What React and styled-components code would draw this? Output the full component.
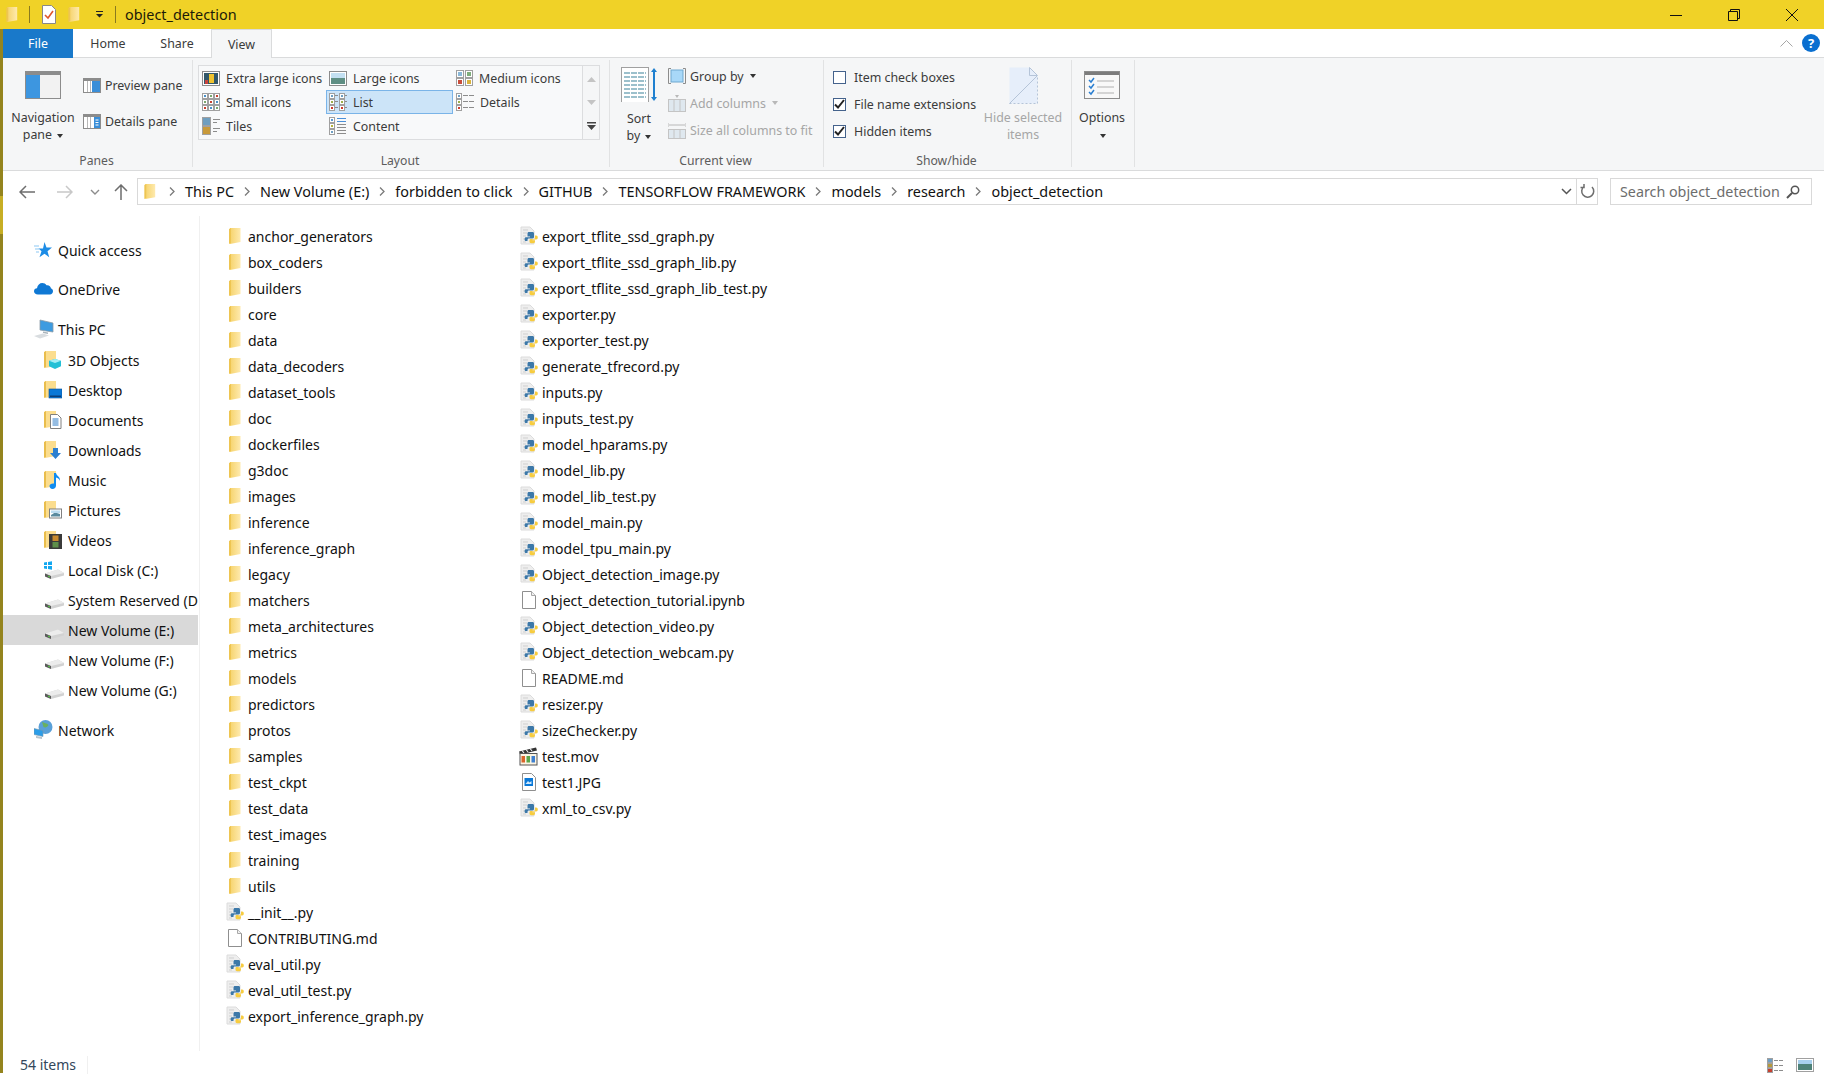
import React from "react";
import styled, { createGlobalStyle } from "styled-components";

const GlobalStyle = createGlobalStyle`
    html, body {
        margin: 0;
        padding: 0;
        width: 1824px;
        height: 1080px;
        overflow: hidden;
        background: #fff;
    }
    * { box-sizing: border-box; }
`;

const folders = ["anchor_generators", "box_coders", "builders", "core", "data", "data_decoders", "dataset_tools", "doc", "dockerfiles", "g3doc", "images", "inference", "inference_graph", "legacy", "matchers", "meta_architectures", "metrics", "models", "predictors", "protos", "samples", "test_ckpt", "test_data", "test_images", "training", "utils"];

const firstCol = [
    ...folders.map((name) => ({ name, kind: "folder" })),
    { name: "__init__.py", kind: "py" },
    { name: "CONTRIBUTING.md", kind: "blank" },
    { name: "eval_util.py", kind: "py" },
    { name: "eval_util_test.py", kind: "py" },
    { name: "export_inference_graph.py", kind: "py" },
];

const secondCol = [
    { name: "export_tflite_ssd_graph.py", kind: "py" },
    { name: "export_tflite_ssd_graph_lib.py", kind: "py" },
    { name: "export_tflite_ssd_graph_lib_test.py", kind: "py" },
    { name: "exporter.py", kind: "py" },
    { name: "exporter_test.py", kind: "py" },
    { name: "generate_tfrecord.py", kind: "py" },
    { name: "inputs.py", kind: "py" },
    { name: "inputs_test.py", kind: "py" },
    { name: "model_hparams.py", kind: "py" },
    { name: "model_lib.py", kind: "py" },
    { name: "model_lib_test.py", kind: "py" },
    { name: "model_main.py", kind: "py" },
    { name: "model_tpu_main.py", kind: "py" },
    { name: "Object_detection_image.py", kind: "py" },
    { name: "object_detection_tutorial.ipynb", kind: "blank" },
    { name: "Object_detection_video.py", kind: "py" },
    { name: "Object_detection_webcam.py", kind: "py" },
    { name: "README.md", kind: "blank" },
    { name: "resizer.py", kind: "py" },
    { name: "sizeChecker.py", kind: "py" },
    { name: "test.mov", kind: "mov" },
    { name: "test1.JPG", kind: "jpg" },
    { name: "xml_to_csv.py", kind: "py" },
];

const crumbs = ["This PC", "New Volume (E:)", "forbidden to click", "GITHUB", "TENSORFLOW FRAMEWORK", "models", "research", "object_detection"];

// ---------- icons ----------

function FolderIcon({ w = 12, h = 18 }) {
    return (
        <svg width={w} height={h} viewBox="0 0 12 18">
            <defs>
                <linearGradient id="fg" x1="0" x2="1" y1="0" y2="0">
                    <stop offset="0" stopColor="#f6d36c" />
                    <stop offset="1" stopColor="#feeaae" />
                </linearGradient>
            </defs>
            <path d="M1 1h10.500v14L1 17z" fill="url(#fg)" />
            <path d="M0 2l2-1v15l-2 1z" fill="#eec552" />
        </svg>
    );
}

function SmallFolder({ children }) {
    return (
        <svg width="18" height="20" viewBox="0 0 18 20">
            <path d="M1 1h11v15L1 18z" fill="#fbdd8e" />
            <path d="M0 2l2-1v16l-2 1z" fill="#e9bd4c" />
            {children}
        </svg>
    );
}

function PyIcon() {
    return (
        <svg width="20" height="20" viewBox="0 0 20 20">
            <path d="M2 1h9l4 4v13H2z" fill="#eeeeee" stroke="#dcdcdc" />
            <path d="M4 4h5M4 7h4M4 10h3M4 13h3M4 16h3" stroke="#cfcfcf" />
            <path d="M10 6h3.500c1 0 1.500.6 1.500 1.500V11c0 .9-.6 1.400-1.500 1.400H10c-1 0-1.500.6-1.500 1.500v1.200H7c-.9 0-1.400-.7-1.400-1.900 0-1.400.6-2 1.500-2H11v-.7H8.500V7.500C8.500 6.500 9 6 10 6z" fill="#3c78a8" />
            <path d="M16 9.500h1.200c1 0 1.600.7 1.600 2s-.6 2-1.600 2H13.500v.7H16v1.400c0 1-.6 1.600-1.600 1.600H12c-1 0-1.500-.6-1.500-1.600V14.200c0-1 .6-1.300 1.500-1.300h2.500c1 0 1.500-.6 1.500-1.500z" fill="#f7cc3f" />
        </svg>
    );
}

function BlankIcon() {
    return (
        <svg width="14" height="18" viewBox="0 0 14 18">
            <path d="M.5.5h9l4 4v13H.5z" fill="#fff" stroke="#8f8f8f" />
            <path d="M9.500.5v4h4" fill="#f0f0f0" stroke="#a8a8a8" />
        </svg>
    );
}

function MovIcon() {
    return (
        <svg width="19" height="19" viewBox="0 0 19 19">
            <path d="M0 4.500L17 .5l1 3-17 4z" fill="#333" />
            <path d="M3 3.500l2 2.500M7 2.500l2 2.500M11 1.500l2 2.500" stroke="#eee" strokeWidth="1.200" />
            <rect x="1" y="6.500" width="17" height="11.500" fill="#fbf4e4" stroke="#555" />
            <rect x="2.500" y="9" width="3.500" height="6.500" fill="#d9642a" />
            <rect x="7.500" y="9" width="3.500" height="6.500" fill="#5aa64a" />
            <rect x="12.500" y="9" width="3.500" height="6.500" fill="#3d7fd0" />
        </svg>
    );
}

function JpgIcon() {
    return (
        <svg width="14" height="18" viewBox="0 0 14 18">
            <path d="M.5.5h9l4 4v13H.5z" fill="#fff" stroke="#8f8f8f" />
            <rect x="2.500" y="5" width="8.500" height="8" fill="#0a78d7" />
            <path d="M3.500 11l2.500-3 1.500 1.500 2-1.500v3z" fill="#cfe7fb" />
        </svg>
    );
}

const fileIcons = {
    folder: <FolderIcon />,
    py: <PyIcon />,
    blank: <BlankIcon />,
    mov: <MovIcon />,
    jpg: <JpgIcon />,
};

function DriveIcon({ windows }) {
    return (
        <svg width="20" height="20" viewBox="0 0 20 20">
            {windows && <path d="M0 2.500l3-.5v3H0zM4 2l4-.7V5H4zM0 6h3v3l-3-.5zM4 6h4v3.700L4 9z" fill="#12a7f0" />}
            <path d="M1 13.500L14 9.500l6 3.500v2.500L7 19l-6-2.500z" fill="#d2d2d2" />
            <path d="M1 13.500L7 16l13-3-6-3.500z" fill="#ececec" />
            <path d="M1 13.500L7 16v3l-6-2.500z" fill="#5b5b5b" />
            <path d="M4 15.500l2 .8v1.200l-2-.8z" fill="#58c44a" />
        </svg>
    );
}

const navIcons = {
    quick: (
        <svg width="18" height="18" viewBox="0 0 18 18">
            <path d="M10.500 1l2 5.500H18l-4.500 3.700 1.700 6-4.700-3.500-5 3.500 2-6-3-2.700h4.500z" fill="#1c8ce6" />
            <path d="M0 5h5M1 8h4M2 11h3" stroke="#8cc8f4" strokeWidth="1.200" />
        </svg>
    ),
    onedrive: (
        <svg width="19" height="14" viewBox="0 0 19 14">
            <path d="M4 12.500C1.500 12.500 0 11 0 9.300c0-1.800 1.300-3 3-3C3.500 3 5.700 1 8.300 1c1.800 0 3.300.9 4.200 2.300 2.500-.4 4.200 1 4.500 3.200 1.300.2 2 1.300 2 2.800 0 1.900-1.400 3.200-3 3.200z" fill="#0f78d4" />
        </svg>
    ),
    pc: (
        <svg width="20" height="20" viewBox="0 0 20 20">
            <path d="M6 1l13 3v9L6 11z" fill="#3d9be0" stroke="#8a9aa6" strokeWidth=".800" />
            <path d="M9 12.500l5 1v1.500l-5-1z" fill="#aab4bb" />
            <path d="M0 17l9-2.500 6 2L6 19.500z" fill="#d9dde0" />
        </svg>
    ),
    objects: (
        <SmallFolder>
            <path d="M11 9l6 1.800v5.500L11 19l-6-2.700v-5.500z" fill="#23c0d6" />
            <path d="M11 9l6 1.800-6 2.200-6-2.200z" fill="#a5eef5" />
        </SmallFolder>
    ),
    desktop: (
        <SmallFolder>
            <rect x="5" y="9" width="13" height="9" fill="#0a78d7" stroke="#0a4f92" strokeWidth=".600" />
            <rect x="6" y="15.500" width="11" height="1.500" fill="#0c3f78" />
        </SmallFolder>
    ),
    documents: (
        <SmallFolder>
            <path d="M6.500 4.500h7l3.500 3.500v10.500H6.500z" fill="#fff" stroke="#808080" />
            <path d="M8.500 9h6M8.500 11h6M8.500 13h6M8.500 15h6" stroke="#2a7ac7" />
        </SmallFolder>
    ),
    downloads: (
        <SmallFolder>
            <path d="M9 8h5v5h3l-5.500 6L6 13h3z" fill="#2b7fd1" />
        </SmallFolder>
    ),
    music: (
        <SmallFolder>
            <path d="M10 3h2c.5 3 4.500 3.500 4 8-.5-2-2-3-4-3.500v8c0 2-1.500 3.500-3.500 3.500S5.500 17.500 5.500 16c0-1.800 2.300-3 4.500-2.500z" fill="#0f8cf0" />
        </SmallFolder>
    ),
    pictures: (
        <SmallFolder>
            <rect x="5.500" y="9" width="12" height="9" fill="#fff" stroke="#808080" />
            <path d="M7 15l4-2.500 5 1.500v2.500H7z" fill="#5a8a9e" />
            <rect x="7" y="10.500" width="9" height="2.500" fill="#bcdcf0" />
        </SmallFolder>
    ),
    videos: (
        <SmallFolder>
            <rect x="5" y="4" width="13" height="15" fill="#3a3a3a" />
            <rect x="8.500" y="5.500" width="6" height="5.500" fill="#c8892e" />
            <rect x="8.500" y="12" width="6" height="5.500" fill="#5e8f4a" />
        </SmallFolder>
    ),
    c: <DriveIcon windows />,
    drive: <DriveIcon />,
    network: (
        <svg width="20" height="20" viewBox="0 0 20 20">
            <circle cx="11.500" cy="7" r="7" fill="#5aa0d8" />
            <path d="M8 2c2 1 5 1 6.500 3-1 2-3 3-5 2z" fill="#69b060" />
            <path d="M0 8.500l9 2v6l-9-2z" fill="#2b9de8" stroke="#7b98ad" strokeWidth=".600" />
            <path d="M2 16l6 1v2l-6-1z" fill="#b9c4cc" />
        </svg>
    ),
};

function GalleryIcon({ type }) {
    const mini = (x, y, c) => (
        <g key={`${x}-${y}`}>
            <rect x={x + 0.5} y={y + 0.5} width="5" height="5" fill="#fff" stroke="#a0a0a0" />
            <rect x={x + 2} y={y + 2} width="2" height="2" fill={c} />
        </g>
    );
    const dash = (x, y, w) => <path key={`d${x}-${y}`} d={`M${x} ${y + 0.5}h${w}`} stroke="#8c8c8c" />;
    const frame = (x, y, c) => (
        <g key={`f${x}-${y}`}>
            <rect x={x + 0.5} y={y + 0.5} width="7" height="7" fill="#fff" stroke="#a0a0a0" />
            <rect x={x + 2} y={y + 2} width="4" height="4" fill={c} />
        </g>
    );
    if (type === "xl") {
        return (
            <svg width="18" height="15" viewBox="0 0 18 15">
                <rect x=".5" y=".5" width="17" height="14" fill="#fff" stroke="#8c8c8c" />
                <rect x="2" y="2" width="14" height="11" fill="#33586a" />
                <rect x="7" y="3" width="5" height="9" fill="#f0c330" />
                <rect x="3" y="9" width="3" height="4" fill="#c9443f" />
            </svg>
        );
    }
    if (type === "large") {
        return (
            <svg width="18" height="15" viewBox="0 0 18 15">
                <rect x=".5" y=".5" width="17" height="14" fill="#fff" stroke="#8c8c8c" />
                <rect x="2" y="2" width="14" height="5" fill="#c3e0f2" />
                <rect x="2" y="7" width="14" height="6" fill="#5f8f84" />
            </svg>
        );
    }
    if (type === "medium") {
        return (
            <svg width="17" height="16" viewBox="0 0 17 16">
                {frame(0, 0, "#8ab8d8")}
                {frame(9, 0, "#7fae7c")}
                {frame(0, 8, "#c84e3c")}
                {frame(9, 8, "#d9b33c")}
            </svg>
        );
    }
    if (type === "small") {
        const cs = ["#4a90c8", "#7aa86e", "#c7402f"];
        return (
            <svg width="18" height="18" viewBox="0 0 18 18">
                {[0, 6, 12].map((y, r) => [0, 6, 12].map((x, i) => mini(x, y, cs[(i + r) % 3])))}
            </svg>
        );
    }
    if (type === "list") {
        const cs = ["#6d9fc4", "#9db04a", "#d03a2c"];
        return (
            <svg width="18" height="18" viewBox="0 0 18 18">
                {[0, 6, 12].map((y, r) => (
                    <g key={y}>
                        {mini(0, y, cs[r])}
                        {dash(6, y + 2, 3)}
                        {mini(10, y, cs[r])}
                        {dash(16, y + 2, 2)}
                    </g>
                ))}
            </svg>
        );
    }
    if (type === "details") {
        const cs = ["#6d9fc4", "#9db04a", "#d03a2c"];
        return (
            <svg width="18" height="18" viewBox="0 0 18 18">
                {[0, 6, 12].map((y, r) => (
                    <g key={y}>
                        {mini(0, y, cs[r])}
                        {dash(7, y + 2, 5)}
                        {dash(13, y + 2, 5)}
                    </g>
                ))}
            </svg>
        );
    }
    if (type === "tiles") {
        return (
            <svg width="18" height="18" viewBox="0 0 18 18">
                <rect x=".5" y=".5" width="8" height="8" fill="#6f9ebf" stroke="#a0a0a0" />
                <rect x=".5" y="9.500" width="8" height="8" fill="#c99a3a" stroke="#a0a0a0" />
                <path d="M11 2.500h7M11 5.500h4M11 11.500h7M11 14.500h4" stroke="#8c8c8c" />
            </svg>
        );
    }
    return (
        <svg width="18" height="18" viewBox="0 0 18 18">
            {[0, 6, 12].map((y, r) => (
                <g key={y}>
                    {mini(0, y, ["#5b9bd5", "#b5b53c", "#6d9fc4"][r])}
                    <path d={`M8 ${y + 1.5}h9M8 ${y + 4.5}h9`} stroke={r === 0 ? "#4a90d9" : "#8c8c8c"} />
                </g>
            ))}
        </svg>
    );
}

function PaneIcon({ kind }) {
    return (
        <svg width="18" height="15" viewBox="0 0 18 15">
            <rect x=".5" y=".5" width="17" height="14" fill="#fff" stroke="#8c8c8c" />
            <rect x="1" y="1" width="16" height="2" fill="#8c8c8c" />
            {kind === "details" ? <rect x="11" y="3" width="6" height="11" fill="#3a8ed8" /> : <rect x="9" y="3" width="8" height="11" fill="#3a8ed8" />}
            <path d="M4.500 3v11M7.500 3v11" stroke="#b8b8b8" />
            {kind === "details" && <path d="M12.500 6h3M12.500 8.500h3M12.500 11h3" stroke="#fff" />}
        </svg>
    );
}

const Check = () => (
    <svg width="11" height="10" viewBox="0 0 11 10">
        <path d="M1 5.500l3 3 6-7.500" fill="none" stroke="#222" strokeWidth="2" />
    </svg>
);

// ---------- page ----------

export default function App() {
    return (
        <>
            <GlobalStyle />
            <Window>
                <Edge />
                <Main>
                    <TitleBar>
                        <QuickIcons>
                            <FolderIcon w={12} h={17} />
                            <TitleSep />
                            <svg width="14" height="19" viewBox="0 0 14 19">
                                <path d="M.5.500h9l4 4v14H.5z" fill="#fff" stroke="#888" />
                                <path d="M3 10l3 3 5-7" fill="none" stroke="#e0562a" strokeWidth="1.600" />
                            </svg>
                            <FolderIcon w={12} h={17} />
                            <Dropper>
                                <svg width="7" height="7" viewBox="0 0 7 7">
                                    <path d="M0 0h7v1H0zM0 3h7L3.500 6.500z" fill="#222" />
                                </svg>
                            </Dropper>
                            <TitleSep />
                        </QuickIcons>
                        <TitleText>object_detection</TitleText>
                        <WindowButtons>
                            <WinButton>
                                <svg width="12" height="12" viewBox="0 0 12 12"><path d="M0 6.500h12" stroke="#111" /></svg>
                            </WinButton>
                            <WinButton>
                                <svg width="12" height="12" viewBox="0 0 12 12"><path d="M.5 2.500h9v9h-9zM2.500 2.500v-2h9v9h-2" fill="none" stroke="#111" /></svg>
                            </WinButton>
                            <WinButton>
                                <svg width="12" height="12" viewBox="0 0 12 12"><path d="M0 0l12 12M12 0L0 12" stroke="#111" /></svg>
                            </WinButton>
                        </WindowButtons>
                    </TitleBar>

                    <TabBar>
                        <FileTab>File</FileTab>
                        <Tab $w={70}>Home</Tab>
                        <Tab $w={68}>Share</Tab>
                        <ViewTab>View</ViewTab>
                        <TabRight>
                            <svg width="13" height="7" viewBox="0 0 13 7"><path d="M.5 6.500l6-6 6 6" fill="none" stroke="#a6a6a6" /></svg>
                            <HelpDot>?</HelpDot>
                        </TabRight>
                    </TabBar>

                    <Ribbon>
                        <Group $w={190}>
                            <GroupBody>
                                <BigButton $w={80}>
                                    <svg width="36" height="28" viewBox="0 0 36 28">
                                        <rect x=".5" y=".5" width="35" height="27" fill="#f2f2f2" stroke="#8c8c8c" />
                                        <rect x="1" y="1" width="34" height="3" fill="#8c8c8c" />
                                        <rect x="1" y="4" width="14" height="23" fill="#3d96e0" />
                                    </svg>
                                    <BigLabel $top={10}>Navigation</BigLabel>
                                    <BigLabel>pane <Caret /></BigLabel>
                                </BigButton>
                                <PaneCol>
                                    <PaneRow><PaneIcon kind="preview" />Preview pane</PaneRow>
                                    <PaneRow><PaneIcon kind="details" />Details pane</PaneRow>
                                </PaneCol>
                            </GroupBody>
                            <GroupLabel>Panes</GroupLabel>
                        </Group>

                        <Group $w={417}>
                            <GroupBody>
                                <Gallery>
                                    <GalleryGrid>
                                        <GalleryItem><GalleryIcon type="xl" />Extra large icons</GalleryItem>
                                        <GalleryItem><GalleryIcon type="large" />Large icons</GalleryItem>
                                        <GalleryItem><GalleryIcon type="medium" />Medium icons</GalleryItem>
                                        <GalleryItem><GalleryIcon type="small" />Small icons</GalleryItem>
                                        <GalleryItem $active><GalleryIcon type="list" />List</GalleryItem>
                                        <GalleryItem><GalleryIcon type="details" />Details</GalleryItem>
                                        <GalleryItem><GalleryIcon type="tiles" />Tiles</GalleryItem>
                                        <GalleryItem><GalleryIcon type="content" />Content</GalleryItem>
                                    </GalleryGrid>
                                    <GalleryScroll>
                                        <svg width="9" height="5" viewBox="0 0 9 5"><path d="M4.500 0L9 5H0z" fill="#c4c4c4" /></svg>
                                        <svg width="9" height="5" viewBox="0 0 9 5"><path d="M0 0h9L4.500 5z" fill="#c4c4c4" /></svg>
                                        <svg width="9" height="8" viewBox="0 0 9 8"><path d="M0 0h9v1.500H0zM0 3h9L4.500 8z" fill="#444" /></svg>
                                    </GalleryScroll>
                                </Gallery>
                            </GroupBody>
                            <GroupLabel>Layout</GroupLabel>
                        </Group>

                        <Group $w={214}>
                            <GroupBody>
                                <SortButton>
                                    <svg width="40" height="35" viewBox="0 0 40 35">
                                        <rect x=".5" y=".5" width="27" height="35" fill="#fff" stroke="#a0a0a0" />
                                        <path d="M3 6h22M3 10h22M3 14h22M3 18h22M3 22h22M3 26h22M3 30h22" stroke="#9cc0cc" strokeWidth="2" strokeDasharray="6 1" />
                                        <path d="M33 1l3 4h-2v25h2l-3 4-3-4h2V5h-2z" fill="#1f80d0" />
                                    </svg>
                                    <BigLabel $top={8}>Sort</BigLabel>
                                    <BigLabel>by <Caret /></BigLabel>
                                </SortButton>
                                <ViewCol>
                                    <ViewRow>
                                        <svg width="18" height="16" viewBox="0 0 18 16">
                                            <path d="M3 .5H.5v15H3M15 .5h2.500v15H15" fill="none" stroke="#8c8c8c" />
                                            <rect x="3" y="2" width="12" height="12" fill="#a8d8f8" stroke="#6fa8d0" />
                                        </svg>
                                        Group by <Caret />
                                    </ViewRow>
                                    <ViewRow $off>
                                        <svg width="18" height="17" viewBox="0 0 18 17">
                                            <path d="M7 0h4l-2 3z" fill="#b8b8b8" />
                                            <rect x=".5" y="4.500" width="17" height="12" fill="#dfe8ef" stroke="#c4c4c4" />
                                            <path d="M6 5v11M12 5v11" stroke="#c4c4c4" />
                                        </svg>
                                        Add columns <Caret $off />
                                    </ViewRow>
                                    <ViewRow $off>
                                        <svg width="18" height="17" viewBox="0 0 18 17">
                                            <path d="M0 1v4M18 1v4M1 3h16" stroke="#b8b8b8" />
                                            <rect x=".5" y="7.500" width="17" height="9" fill="#dfe8ef" stroke="#c4c4c4" />
                                            <path d="M6 8v8M12 8v8" stroke="#c4c4c4" />
                                        </svg>
                                        Size all columns to fit
                                    </ViewRow>
                                </ViewCol>
                            </GroupBody>
                            <GroupLabel>Current view</GroupLabel>
                        </Group>

                        <Group $w={248}>
                            <GroupBody>
                                <CheckCol>
                                    <CheckRow><CheckBox /> Item check boxes</CheckRow>
                                    <CheckRow><CheckBox><Check /></CheckBox> File name extensions</CheckRow>
                                    <CheckRow><CheckBox><Check /></CheckBox> Hidden items</CheckRow>
                                </CheckCol>
                                <HideButton>
                                    <svg width="29" height="37" viewBox="0 0 29 37">
                                        <path d="M.5.500h20l8 8v28H.5z" fill="#e6eefa" />
                                        <path d="M20.500.500l8 8h-8zM.5 36.500L28 9" fill="none" stroke="#b5c4d8" />
                                        <path d="M.5 36.500h28v-28" fill="none" stroke="#b5c4d8" strokeDasharray="2 2" />
                                    </svg>
                                    <BigLabel $top={5} $off>Hide selected</BigLabel>
                                    <BigLabel $off>items</BigLabel>
                                </HideButton>
                            </GroupBody>
                            <GroupLabel>Show/hide</GroupLabel>
                        </Group>

                        <Group $w={63}>
                            <OptionsButton>
                                <svg width="36" height="28" viewBox="0 0 36 28">
                                    <rect x=".5" y=".5" width="35" height="27" fill="#f8f8f8" stroke="#8c8c8c" />
                                    <rect x="1" y="1" width="34" height="3" fill="#7c7c7c" />
                                    <path d="M5 9l2 2 3-4M5 15l2 2 3-4M5 21l2 2 3-4" fill="none" stroke="#2b7fd1" strokeWidth="1.500" />
                                    <path d="M13 10h17M13 16h17M13 22h17" stroke="#b0b0b0" />
                                </svg>
                                <BigLabel $top={10}>Options</BigLabel>
                                <BigLabel><Caret /></BigLabel>
                            </OptionsButton>
                        </Group>
                    </Ribbon>

                    <NavBar>
                        <Arrows>
                            <ArrowSlot $w={38}><svg width="16" height="14" viewBox="0 0 16 14"><path d="M7 1L1 7l6 6M1 7h15" fill="none" stroke="#6e6e6e" strokeWidth="1.500" /></svg></ArrowSlot>
                            <ArrowSlot $w={38}><svg width="16" height="14" viewBox="0 0 16 14"><path d="M9 1l6 6-6 6M15 7H0" fill="none" stroke="#c8c8c8" strokeWidth="1.500" /></svg></ArrowSlot>
                            <ArrowSlot $w={22}><svg width="10" height="6" viewBox="0 0 10 6"><path d="M1 1l4 4 4-4" fill="none" stroke="#8c8c8c" strokeWidth="1.400" /></svg></ArrowSlot>
                            <ArrowSlot $w={30}><svg width="14" height="16" viewBox="0 0 14 16"><path d="M1 7l6-6 6 6M7 1v15" fill="none" stroke="#6e6e6e" strokeWidth="1.500" /></svg></ArrowSlot>
                        </Arrows>
                        <AddressBox>
                            <FolderIcon w={12} h={17} />
                            <Crumbs>
                                {crumbs.map((c) => (
                                    <Crumb key={c}>
                                        <svg width="6" height="9" viewBox="0 0 6 9"><path d="M1 .5l4 4-4 4" fill="none" stroke="#7a7a7a" strokeWidth="1.300" /></svg>
                                        <span>{c}</span>
                                    </Crumb>
                                ))}
                            </Crumbs>
                            <AddressEnd>
                                <svg width="11" height="7" viewBox="0 0 11 7"><path d="M1 1l4.500 4.500L10 1" fill="none" stroke="#555" strokeWidth="1.500" /></svg>
                                <RefreshSlot>
                                    <svg width="15" height="15" viewBox="0 0 15 15"><path d="M4 2.500A6 6 0 1 0 12 3M4 0v3.500H.5" fill="none" stroke="#6e6e6e" strokeWidth="1.500" /></svg>
                                </RefreshSlot>
                            </AddressEnd>
                        </AddressBox>
                        <SearchBox>
                            Search object_detection
                            <svg width="14" height="14" viewBox="0 0 14 14"><circle cx="9" cy="5" r="3.700" fill="none" stroke="#555" strokeWidth="1.500" /><path d="M6 8l-5 5" stroke="#555" strokeWidth="2" /></svg>
                        </SearchBox>
                    </NavBar>

                    <Body>
                        <NavPane>
                            <NavItem><NavIcon>{navIcons.quick}</NavIcon>Quick access</NavItem>
                            <NavItem $top={9}><NavIcon>{navIcons.onedrive}</NavIcon>OneDrive</NavItem>
                            <NavItem $top={10}><NavIcon>{navIcons.pc}</NavIcon>This PC</NavItem>
                            <NavItem $sub $top={1}><NavIcon>{navIcons.objects}</NavIcon>3D Objects</NavItem>
                            <NavItem $sub><NavIcon>{navIcons.desktop}</NavIcon>Desktop</NavItem>
                            <NavItem $sub><NavIcon>{navIcons.documents}</NavIcon>Documents</NavItem>
                            <NavItem $sub><NavIcon>{navIcons.downloads}</NavIcon>Downloads</NavItem>
                            <NavItem $sub><NavIcon>{navIcons.music}</NavIcon>Music</NavItem>
                            <NavItem $sub><NavIcon>{navIcons.pictures}</NavIcon>Pictures</NavItem>
                            <NavItem $sub><NavIcon>{navIcons.videos}</NavIcon>Videos</NavItem>
                            <NavItem $sub><NavIcon>{navIcons.c}</NavIcon>Local Disk (C:)</NavItem>
                            <NavItem $sub><NavIcon>{navIcons.drive}</NavIcon>System Reserved (D:)</NavItem>
                            <NavItem $sub $active><NavIcon>{navIcons.drive}</NavIcon>New Volume (E:)</NavItem>
                            <NavItem $sub><NavIcon>{navIcons.drive}</NavIcon>New Volume (F:)</NavItem>
                            <NavItem $sub><NavIcon>{navIcons.drive}</NavIcon>New Volume (G:)</NavItem>
                            <NavItem $top={10}><NavIcon>{navIcons.network}</NavIcon>Network</NavItem>
                        </NavPane>
                        <FileArea>
                            {[firstCol, secondCol].map((col, i) => (
                                <FileCol key={i}>
                                    {col.map((f) => (
                                        <FileRow key={f.name}>
                                            <FileIconSlot>{fileIcons[f.kind]}</FileIconSlot>
                                            <span>{f.name}</span>
                                        </FileRow>
                                    ))}
                                </FileCol>
                            ))}
                        </FileArea>
                    </Body>

                    <StatusBar>
                        <StatusText>54 items</StatusText>
                        <StatusIcons>
                            <svg width="18" height="15" viewBox="0 0 18 15">
                                <rect x=".5" y=".5" width="5" height="4" fill="#6d9fc4" stroke="#a0a0a0" />
                                <rect x=".5" y="5.500" width="5" height="4" fill="#b59a3c" stroke="#a0a0a0" />
                                <rect x=".5" y="10.500" width="5" height="4" fill="#c7402f" stroke="#a0a0a0" />
                                <path d="M7 2.500h4M12 2.500h4M7 7.500h4M12 7.500h4M7 12.500h4M12 12.500h4" stroke="#8c8c8c" />
                            </svg>
                            <svg width="18" height="14" viewBox="0 0 18 14">
                                <rect x=".5" y=".5" width="17" height="13" fill="#fff" stroke="#a0a0a0" />
                                <rect x="2" y="2" width="14" height="4" fill="#a8d0ee" />
                                <rect x="2" y="6" width="14" height="6" fill="#4f8278" />
                            </svg>
                        </StatusIcons>
                    </StatusBar>
                </Main>
            </Window>
        </>
    );
}

// ::::::::::Styled-Components::::::::::
const ui = `"Noto Sans", "Open Sans", sans-serif`;

const Window = styled.div`
    display: flex;
    width: 1824px;
    height: 1080px;
    font-family: ${ui};
    color: #111;
    background: #fff;
`;
const Edge = styled.div`
    width: 3px;
    height: 1073px;
    background: linear-gradient(#f0d227 0 29px, #94841e 29px 196px, #c7ae24 196px 234px, #94841e 234px);
`;
const Main = styled.div`
    flex: 1;
    min-width: 0;
    display: flex;
    flex-direction: column;
`;
const TitleBar = styled.div`
    height: 29px;
    display: flex;
    align-items: center;
    background: #f0d227;
    padding-left: 3px;
`;
const QuickIcons = styled.div`
    display: flex;
    align-items: center;
    gap: 12px;
`;
const TitleSep = styled.div`
    width: 1px;
    height: 17px;
    background: #8a7a1e;
    margin-left: -1px;
`;
const Dropper = styled.div`
    display: flex;
    margin: 0 1px 0 4px;
`;
const TitleText = styled.div`
    font-size: 14.4px;
    margin-left: 9px;
    margin-top: -1px;
    color: #1c1a08;
`;
const WindowButtons = styled.div`
    margin-left: auto;
    display: flex;
    padding-right: 26px;
    gap: 46px;
`;
const WinButton = styled.div`
    display: flex;
    width: 12px;
    height: 12px;
`;
const TabBar = styled.div`
    height: 29px;
    display: flex;
    align-items: stretch;
    background: #fff;
    border-bottom: 1px solid #dadbdc;
    font-size: 12.4px;
`;
const FileTab = styled.div`
    width: 70px;
    margin-bottom: -1px;
    background: #1979ca;
    color: #fff;
    display: flex;
    align-items: center;
    justify-content: center;
`;
const Tab = styled.div`
    width: ${(p) => p.$w}px;
    display: flex;
    align-items: center;
    justify-content: center;
    color: #3b3b3b;
`;
const ViewTab = styled(Tab)`
    width: 61px;
    background: #f5f6f7;
    border: 1px solid #dadbdc;
    border-bottom: none;
    margin-bottom: -1px;
    position: relative;
`;
const TabRight = styled.div`
    margin-left: auto;
    display: flex;
    align-items: center;
    gap: 9px;
    padding-right: 4px;
`;
const HelpDot = styled.div`
    width: 18px;
    height: 18px;
    border-radius: 50%;
    background: #0a6fd0;
    color: #fff;
    font-weight: 700;
    font-size: 13px;
    line-height: 18px;
    text-align: center;
`;
const Ribbon = styled.div`
    height: 113px;
    display: flex;
    background: #f5f6f7;
    border-bottom: 1px solid #dadbdc;
    font-size: 12.4px;
    color: #3b3b3b;
`;
const Group = styled.div`
    width: ${(p) => p.$w}px;
    margin: 2px 0 3px;
    border-right: 1px solid #e1e2e3;
    display: flex;
    flex-direction: column;
`;
const GroupBody = styled.div`
    flex: 1;
    min-height: 0;
    display: flex;
`;
const GroupLabel = styled.div`
    height: 18px;
    line-height: 18px;
    text-align: center;
    color: #5c5c5c;
    font-size: 12.2px;
    flex: none;
    margin-bottom: -3px;
    padding-right: 2px;
`;
const BigButton = styled.div`
    width: ${(p) => p.$w}px;
    display: flex;
    flex-direction: column;
    align-items: center;
    padding-top: 11px;
    flex: none;
`;
const BigLabel = styled.div`
    margin-top: ${(p) => p.$top || 0}px;
    line-height: 17px;
    height: 17px;
    white-space: nowrap;
    color: ${(p) => (p.$off ? "#a6a6a6" : "#3b3b3b")};
`;
const Caret = styled.span`
    display: inline-block;
    width: 0;
    height: 0;
    border: 3.5px solid transparent;
    border-top: 4px solid ${(p) => (p.$off ? "#b8b8b8" : "#333")};
    border-bottom: none;
    vertical-align: middle;
    margin-left: 2px;
`;
const PaneCol = styled.div`
    display: flex;
    flex-direction: column;
    padding-top: 16px;
    gap: 18px;
`;
const PaneRow = styled.div`
    height: 18px;
    display: flex;
    align-items: center;
    gap: 4px;
    white-space: nowrap;
`;
const Gallery = styled.div`
    display: flex;
    margin: 5px 0 0 5px;
    height: 75px;
    width: 402px;
`;
const GalleryGrid = styled.div`
    width: 384px;
    display: grid;
    grid-template-columns: 127px 127px 127px;
    grid-auto-rows: 24px;
    background: #f8f9fa;
    border: 1px solid #dcdddf;
    border-right: none;
`;
const GalleryItem = styled.div`
    display: flex;
    align-items: center;
    gap: 6px;
    padding-left: 3px;
    white-space: nowrap;
    overflow: hidden;
    background: ${(p) => (p.$active ? "#cce4f8" : "transparent")};
    outline: ${(p) => (p.$active ? "1px solid #7ab4e8" : "none")};
    outline-offset: -1px;
`;
const GalleryScroll = styled.div`
    width: 18px;
    background: #f5f6f7;
    border: 1px solid #dcdddf;
    display: flex;
    flex-direction: column;
    align-items: center;
    justify-content: space-between;
    padding: 11px 0 9px;
`;
const SortButton = styled(BigButton)`
    width: 58px;
    padding-top: 7px;

    svg { margin-left: 4px; }
`;
const ViewCol = styled.div`
    display: flex;
    flex-direction: column;
    padding: 7px 0 0 0;
    gap: 9px;
`;
const ViewRow = styled.div`
    height: 18px;
    display: flex;
    align-items: center;
    gap: 4px;
    white-space: nowrap;
    color: ${(p) => (p.$off ? "#a6a6a6" : "#3b3b3b")};
`;
const CheckCol = styled.div`
    width: 164px;
    display: flex;
    flex-direction: column;
    padding: 8px 0 0 9px;
    gap: 9px;
    flex: none;
`;
const CheckRow = styled.div`
    height: 18px;
    display: flex;
    align-items: center;
    gap: 8px;
    white-space: nowrap;
`;
const CheckBox = styled.div`
    width: 13px;
    height: 13px;
    border: 1px solid #44628c;
    background: #fff;
    display: flex;
    align-items: center;
    justify-content: center;
`;
const HideButton = styled(BigButton)`
    width: 70px;
    padding-top: 7px;
`;
const OptionsButton = styled(BigButton)`
    width: 60px;
`;
const NavBar = styled.div`
    height: 38px;
    display: flex;
    align-items: flex-start;
    padding-top: 7px;
    background: #fff;
`;
const Arrows = styled.div`
    width: 134px;
    height: 27px;
    display: flex;
    align-items: center;
    padding-left: 5px;
    flex: none;
`;
const ArrowSlot = styled.div`
    width: ${(p) => p.$w}px;
    display: flex;
    justify-content: center;
    flex: none;
`;
const AddressBox = styled.div`
    width: 1461px;
    height: 27px;
    display: flex;
    align-items: center;
    padding-left: 6px;
    border: 1px solid #d9d9d9;
    flex: none;
`;
const Crumbs = styled.div`
    display: flex;
    align-items: center;
    font-size: 14.4px;
    margin-left: 13px;
`;
const Crumb = styled.div`
    display: flex;
    align-items: center;
    gap: 10px;
    margin-right: 10px;
    white-space: nowrap;
`;
const AddressEnd = styled.div`
    margin-left: auto;
    display: flex;
    align-items: center;
    height: 100%;
    gap: 4px;
`;
const RefreshSlot = styled.div`
    width: 21px;
    height: 100%;
    border-left: 1px solid #d9d9d9;
    display: flex;
    align-items: center;
    justify-content: center;
`;
const SearchBox = styled.div`
    width: 202px;
    height: 27px;
    margin-left: 12px;
    border: 1px solid #d9d9d9;
    display: flex;
    align-items: center;
    justify-content: space-between;
    padding: 0 11px 0 9px;
    font-size: 14.3px;
    color: #6d6d6d;
    white-space: nowrap;
    flex: none;
`;
const Body = styled.div`
    flex: 1;
    min-height: 0;
    display: flex;
    font-size: 14px;
`;
const NavPane = styled.div`
    width: 197px;
    height: 835px;
    margin-top: 7px;
    padding-top: 19px;
    border-right: 1px solid #f0f0f0;
    overflow: hidden;
    flex: none;
`;
const NavItem = styled.div`
    height: 30px;
    margin-top: ${(p) => p.$top || 0}px;
    margin-right: 1px;
    display: flex;
    align-items: center;
    padding-left: ${(p) => (p.$sub ? 41 : 31)}px;
    white-space: nowrap;
    overflow: hidden;
    background: ${(p) => (p.$active ? "#d9d9d9" : "transparent")};
`;
const NavIcon = styled.span`
    width: 24px;
    display: flex;
    align-items: center;
    flex: none;
`;
const FileArea = styled.div`
    display: flex;
    padding: 14px 0 0 23px;
`;
const FileCol = styled.div`
    width: 294px;
`;
const FileRow = styled.div`
    height: 26px;
    display: flex;
    align-items: center;
    white-space: nowrap;
`;
const FileIconSlot = styled.span`
    width: 25px;
    height: 20px;
    display: flex;
    align-items: center;
    justify-content: center;
    padding-right: 2px;
    flex: none;
`;
const StatusBar = styled.div`
    height: 30px;
    display: flex;
    align-items: center;
    font-size: 14px;
    flex: none;
`;
const StatusText = styled.div`
    width: 85px;
    height: 18px;
    line-height: 18px;
    padding-left: 17px;
    border-right: 1px solid #f0f0f0;
    color: #33475b;
`;
const StatusIcons = styled.div`
    margin-left: auto;
    display: flex;
    align-items: center;
    gap: 11px;
    padding-right: 10px;
`;
